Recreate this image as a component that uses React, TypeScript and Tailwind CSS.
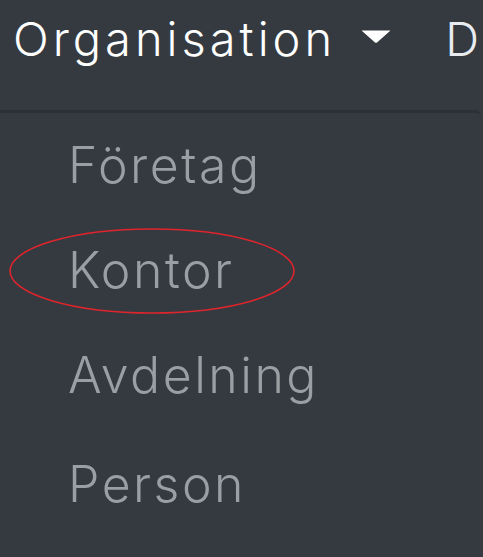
import React from "react";

const items = ["Företag", "Kontor", "Avdelning", "Person"];

export default function App() {
  return (
    <div
      className="relative w-[483px] h-[557px] overflow-hidden bg-[#343a40]"
      style={{ fontFamily: "Inter, 'Open Sans', sans-serif" }}
    >
      {/* top nav bar */}
      <div className="flex items-start h-[110px] pt-[9px] pl-[13px] whitespace-nowrap">
        <span className="text-white text-[47px] leading-[60px] tracking-[4px] font-light">
          Organisation
        </span>
        <svg
          className="ml-[25px] mt-[21px]"
          width="30"
          height="13"
          viewBox="0 0 30 13"
        >
          <path d="M0.5 0.5 H29.5 L16 12.5 Q15 13.2 14 12.5 Z" fill="#ffffff" />
        </svg>
        <span className="ml-[54px] text-[#e8ecf0] text-[47px] leading-[60px] font-light">
          D
        </span>
      </div>

      {/* dropdown panel */}
      <div className="h-[447px] w-[481px] rounded-tr-[6px] border-t-[3px] border-[#2c3136] bg-[#343a40]">
        <ul className="flex flex-col pl-[68px]">
          {items.map((t, i) => (
            <li
              key={t}
              className={
                "text-[#9b9fa4] text-[50px] leading-[105px] tracking-[2.5px] font-light" +
                (i === 3 ? " mt-[4px]" : "")
              }
            >
              {t}
            </li>
          ))}
        </ul>
      </div>

      {/* red annotation ellipse */}
      <svg
        className="absolute left-0 top-0 pointer-events-none"
        width="483"
        height="557"
      >
        <ellipse
          cx="152"
          cy="271"
          rx="142"
          ry="42"
          fill="none"
          stroke="#e0242c"
          strokeWidth="1.6"
        />
      </svg>
    </div>
  );
}
